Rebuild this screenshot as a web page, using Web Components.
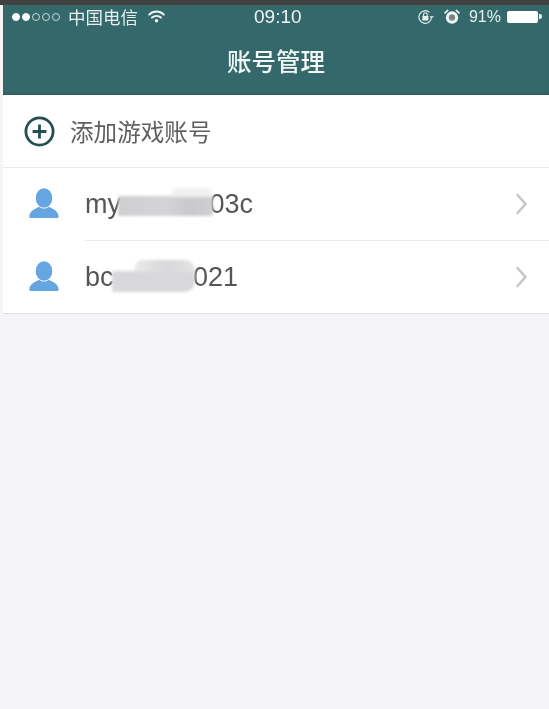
<!DOCTYPE html>
<html lang="zh"><head><meta charset="utf-8">
<style>
html,body{margin:0;height:100%;background:#f5f5f8;overflow:hidden}
body{font-family:"Liberation Sans","Noto Sans CJK SC",sans-serif}
</style></head><body>
<app-screen>
  <status-bar slot="top"></status-bar>
  <nav-bar slot="top">账号管理</nav-bar>
  <add-row>添加游戏账号</add-row>
  <account-row head="my" tail="03c" blur="a"></account-row>
  <account-row head="bc" tail="021" blur="b" last></account-row>
</app-screen>
<script>
const def=(n,html)=>{customElements.define(n,class extends HTMLElement{
  connectedCallback(){ if(this.shadowRoot)return; this.attachShadow({mode:'open'}).innerHTML=html; }
})};
def('app-screen',`<style>
:host{display:flex;flex-direction:column;height:709px;box-sizing:border-box;border-top:5px solid #414141;padding-left:3px;background:#f5f5f8;filter:blur(.45px)}
.head{display:flex;flex-direction:column;background:#35686a;height:90px;box-shadow:inset 0 -2px 2px -1px #2d5a5c}
.list{display:flex;flex-direction:column}
</style><div class="head"><slot name="top"></slot></div><div class="list"><slot></slot></div>`);
def('status-bar',`<style>
:host{display:flex;align-items:center;height:23px;color:#e6efef;position:relative;font-size:16px;padding:0 7px 0 9px}
.dots{display:flex;gap:2px;margin-right:8px}
.dots i{width:8px;height:8px;border-radius:50%;box-sizing:border-box;border:1px solid #c9d9d9}
.dots i.f{background:#fff;border-color:#fff}
.c{font-size:17.5px;font-family:"Noto Sans CJK SC",sans-serif}
.wifi{margin-left:10px}
.time{position:absolute;left:251px;font-size:19px;color:#f0f5f5}
.right{margin-left:auto;display:flex;align-items:center}
.pct{font-size:16px;margin:0 6px 0 9px}
.bat{display:flex;align-items:center}
.bat b{display:block;width:31px;height:12px;background:#fff;border-radius:2px}
.bat u{display:block;width:3px;height:5px;background:#e6efef;margin-left:1px;border-radius:0 2px 2px 0}
</style>
<div class="dots"><i class="f"></i><i class="f"></i><i></i><i></i><i></i></div>
<span class="c">中国电信</span>
<svg class="wifi" width="17" height="13" viewBox="0 0 17 13" fill="none" stroke="#eef5f5" stroke-width="2" stroke-linecap="round"><path d="M1.2 4.600C5.400.6 11.600.6 15.800 4.600"/><path d="M4 7.600c2.600-2.300 6.400-2.300 9 0"/><circle cx="8.500" cy="10.800" r="1.700" fill="#eef5f5" stroke="none"/></svg>
<span class="time">09:10</span>
<div class="right">
<svg width="18" height="16" viewBox="0 0 18 16" fill="none"><path d="M14.500 8a6.300 6.300 0 1 1-2-4.600" stroke="#dfeaea" stroke-width="1.200"/><path d="M17 7.200h-4.600l2.300 2.400z" fill="#dfeaea"/><rect x="5.400" y="7" width="6" height="4.400" rx=".6" fill="#eef5f5"/><path d="M6.600 7V5.600a1.800 1.800 0 0 1 3.600 0V7" stroke="#eef5f5" stroke-width="1.100"/></svg>
<svg style="margin-left:9px" width="16" height="16" viewBox="0 0 15 15" fill="none"><circle cx="7.500" cy="8" r="5.800" fill="#f0f5f5"/><circle cx="7.500" cy="8" r="3" fill="#7a8f8f"/><path d="M7.500 5.800v2.400h1.800" stroke="#a05a50" stroke-width="1"/><path d="M1 3.600 3.400 1.400M14 3.600 11.600 1.400" stroke="#f0f5f5" stroke-width="1.600" stroke-linecap="round"/></svg>
<span class="pct">91%</span>
<div class="bat"><b></b><u></u></div>
</div>`);
def('nav-bar',`<style>
:host{display:flex;flex:1;align-items:center;justify-content:center;color:#f2f7f7;font-size:24.500px;font-weight:500;padding-bottom:2px;font-family:"Noto Sans CJK SC",sans-serif}
</style><slot></slot>`);
def('add-row',`<style>
:host{display:flex;align-items:center;height:72px;background:#fff;border-bottom:1px solid #e9e9ec;padding-left:21px;gap:15px;color:#5f5f5f;font-size:23.600px;font-family:"Noto Sans CJK SC",sans-serif}
</style><svg width="31" height="31" viewBox="0 0 31 31" fill="none" stroke="#23504f"><circle cx="15.500" cy="15.500" r="13.600" stroke-width="2.800"/><path d="M15.500 8.600v13.800M8.600 15.500h13.800" stroke-width="2.800"/></svg><slot></slot>`);
customElements.define('account-row',class extends HTMLElement{
 connectedCallback(){ if(this.shadowRoot)return;
  const a=this.getAttribute('blur')==='a', last=this.hasAttribute('last');
  this.attachShadow({mode:'open'}).innerHTML=`<style>
:host{display:flex;align-items:center;height:${last?72:73}px;background:#fff;padding-left:25px;position:relative;${last?'border-bottom:1px solid #dedee2;':''}}
.in{flex:1;align-self:stretch;display:flex;align-items:center;margin-left:25px;padding-right:21px;${last?'':'border-bottom:1px solid #e9e9ec;'}}
svg.u{flex:none;margin-bottom:${last?2:3}px}
.n{flex:1;display:flex;align-items:center;font-size:27px;color:#565656;font-family:"Liberation Sans",sans-serif;margin-top:1px}
.g{display:block;position:relative;filter:blur(1.500px)}
.g.a{width:95px;margin-left:-3px;margin-right:-3.500px;height:20px;margin-top:3px;background:linear-gradient(90deg,#cfcfd1,#d4d4d6 50%,#c9c9cb 75%,#cfcfd1)}
.g.a::after{content:"";position:absolute;right:0;top:-8px;width:42px;height:9px;border-radius:8px 8px 0 0;background:#f1f1f2}
.g.b{width:83px;margin-left:-1.500px;margin-right:-2px;height:21px;margin-top:8px;background:#d8d8da;border-radius:2px 4px 10px 2px}
.g.b::after{content:"";position:absolute;right:0;top:-11px;width:60px;height:12px;border-radius:8px 10px 0 0;background:linear-gradient(90deg,#e9e9ea,#d8d8da 50%,#e2e2e3)}
</style>
<svg class="u" width="32" height="32" viewBox="0 0 32 32" fill="#64a5e2"><ellipse cx="16" cy="11" rx="8.300" ry="9.800"/><path d="M1.300 29.500c.6-5 3.600-7 10.200-9.700 1.200 2.400 7.800 2.400 9 0 6.500 2.700 9.500 4.700 10.200 9.700 0 1-1 1.500-2.300 1.500H3.600c-1.300 0-2.400-.5-2.300-1.500z"/></svg>
<div class="in"><div class="n"><span>${this.getAttribute('head')}</span><span class="g ${a?'a':'b'}"></span><span>${this.getAttribute('tail')}</span></div>
<svg width="14" height="22" viewBox="0 0 14 22" fill="none" stroke="#c6c6c8" stroke-width="2.600" stroke-linecap="round" stroke-linejoin="round"><path d="M3.500 2 11.500 11 3.500 20"/></svg></div>`;
 }
});
</script>
</body></html>
